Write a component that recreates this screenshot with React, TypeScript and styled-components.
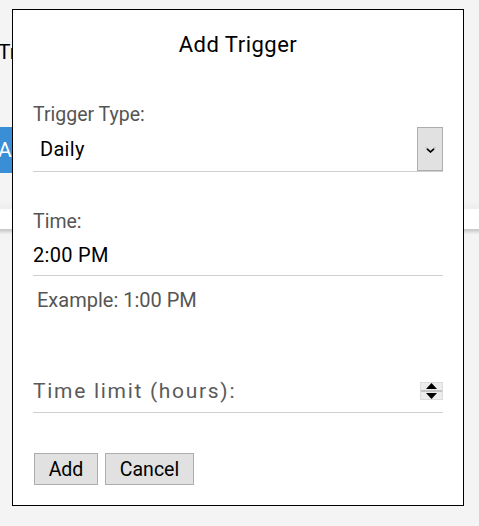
import React from "react";
import styled, { createGlobalStyle } from "styled-components";

const Global = createGlobalStyle`
  html, body { margin: 0; padding: 0; background: #f4f4f4; }
  body { font-family: Roboto, "Noto Sans", Arial, sans-serif; overflow: hidden; }
  * { box-sizing: border-box; }
`;

const Backdrop = styled.div`
  width: 479px;
  height: 526px;
  display: flex;
  flex-direction: column;
  margin-left: -14px;
`;

const PageHeading = styled.div`
  font-size: 21px;
  line-height: 24px;
  color: #000;
  padding: 40px 0 0 12px;
  height: 127px;
`;

const BlueButton = styled.div`
  width: 60px;
  height: 46px;
  background: #3a8ed6;
  color: #fff;
  font-size: 21px;
  display: flex;
  align-items: center;
  padding-left: 12px;
`;

const Bar = styled.div`
  margin-top: 36px;
  height: 20px;
  width: 520px;
  background: #fff;
  box-shadow: 0 3px 3px rgba(0, 0, 0, 0.18), 0 -4px 6px rgba(0, 0, 0, 0.03);
`;

const Dialog = styled.div`
  position: fixed;
  left: 12px;
  top: 9px;
  width: 452px;
  height: 497px;
  background: #fff;
  border: 1px solid #000;
  padding: 22px 20px 0 20px;
  display: flex;
  flex-direction: column;
`;

const Title = styled.div`
  text-align: center;
  font-size: 22px;
  line-height: 26px;
  letter-spacing: 0.5px;
  color: #000;
`;

const Label = styled.div<{ $mt: number }>`
  margin-top: ${(p) => p.$mt}px;
  font-size: 19.5px;
  line-height: 20px;
  color: #555;
`;

const SelectRow = styled.div`
  margin-top: 2px;
  height: 45px;
  display: flex;
  align-items: center;
  justify-content: space-between;
  border-bottom: 1px solid #cfcfcf;
  padding-left: 7px;
`;

const Value = styled.span`
  font-size: 20px;
  letter-spacing: 0.3px;
  color: #000;
`;

const ArrowBox = styled.div`
  width: 26px;
  height: 44px;
  align-self: flex-start;
  background: #e1e1e1;
  border: 1px solid #adadad;
  display: flex;
  align-items: center;
  justify-content: center;
  padding-top: 2px;
`;

const InputRow = styled.div`
  margin-top: 2px;
  height: 42px;
  display: flex;
  align-items: center;
  border-bottom: 1px solid #cfcfcf;
`;

const Hint = styled.div`
  margin-top: 12px;
  padding-left: 4px;
  font-size: 20px;
  line-height: 24px;
  color: #555;
`;

const LimitRow = styled.div`
  margin-top: 57px;
  height: 44px;
  display: flex;
  align-items: center;
  justify-content: space-between;
  border-bottom: 1px solid #cfcfcf;
`;

const Placeholder = styled.span`
  font-size: 21px;
  letter-spacing: 1.7px;
  color: #5a5a5a;
`;

const Spinner = styled.div`
  width: 23px;
  height: 18px;
  background: #ececec;
  border: 1px solid #dcdcdc;
  display: flex;
  flex-direction: column;
  align-items: center;
  justify-content: space-between;
`;

const Buttons = styled.div`
  margin-top: 40px;
  display: flex;
  gap: 7px;
  padding-left: 1px;
`;

const Btn = styled.button<{ $w: number }>`
  width: ${(p) => p.$w}px;
  height: 32px;
  background: #e1e1e1;
  border: 1px solid #adadad;
  font-family: Roboto, Arial, sans-serif;
  font-size: 19.5px;
  color: #000;
  padding: 0;
  border-radius: 0;
`;

function Chevrons() {
  return (
    <svg width="11" height="6" viewBox="0 0 11 6">
      <path d="M0.5 0.5 L5.5 3.8 L10.5 0.5" stroke="#a0a0a0" strokeWidth="1" fill="none" />
      <path d="M2 1.8 L5.5 5 L9 1.8" stroke="#000" strokeWidth="1.6" fill="none" />
    </svg>
  );
}

function SpinArrows() {
  return (
    <>
      <svg width="11" height="6" viewBox="0 0 11 6">
        <path d="M5.5 0 L11 6 L0 6 Z" fill="#000" />
      </svg>
      <svg width="21" height="2" viewBox="0 0 21 2">
        <rect x="0" y="0" width="21" height="2" fill="#c4c4c4" />
      </svg>
      <svg width="11" height="6" viewBox="0 0 11 6">
        <path d="M0 0 L11 0 L5.5 6 Z" fill="#000" />
      </svg>
    </>
  );
}

export default function App() {
  return (
    <>
      <Global />
      <Backdrop>
        <PageHeading>Triggers</PageHeading>
        <BlueButton>Add</BlueButton>
        <Bar />
      </Backdrop>
      <Dialog>
        <Title>Add Trigger</Title>
        <Label $mt={47}>Trigger Type:</Label>
        <SelectRow>
          <Value>Daily</Value>
          <ArrowBox>
            <Chevrons />
          </ArrowBox>
        </SelectRow>
        <Label $mt={40}>Time:</Label>
        <InputRow>
          <Value>2:00 PM</Value>
        </InputRow>
        <Hint>Example: 1:00 PM</Hint>
        <LimitRow>
          <Placeholder>Time limit (hours):</Placeholder>
          <Spinner>
            <SpinArrows />
          </Spinner>
        </LimitRow>
        <Buttons>
          <Btn $w={64}>Add</Btn>
          <Btn $w={89}>Cancel</Btn>
        </Buttons>
      </Dialog>
    </>
  );
}
